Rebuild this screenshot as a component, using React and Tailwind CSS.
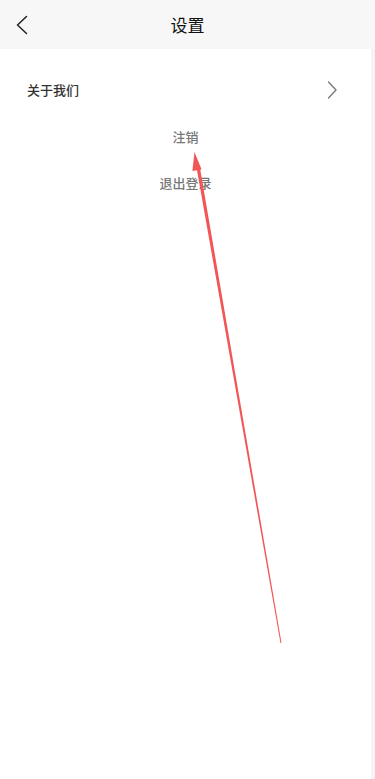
const fuente = { fontFamily: '"Noto Sans CJK SC", "Noto Sans", sans-serif' };

const App = () => {
  return (
    <div className="relative w-[375px] h-[779px] overflow-hidden bg-[#f5f5f5]" style={fuente}>
      {/* Header */}
      <div className="h-[49px] bg-[#f7f7f7] flex items-center relative">
        <div className="pl-[16px] flex items-center">
          <svg width="12" height="20" viewBox="0 0 12 20" fill="none">
            <path d="M10.5 1.5 L1.5 10 L10.5 18.5" stroke="#222" strokeWidth="1.5" strokeLinecap="round" strokeLinejoin="round" />
          </svg>
        </div>
        <div className="absolute inset-x-0 text-center text-[17px] text-[#111] leading-none pointer-events-none">
          设置
        </div>
      </div>

      {/* Contenido */}
      <div className="w-[371px] h-[730px] bg-white">
        <div className="flex items-center justify-between pl-[27px] pr-[34px] h-[82px]">
          <span className="text-[13px] font-medium text-[#333]">关于我们</span>
          <svg width="10" height="18" viewBox="0 0 10 18" fill="none">
            <path d="M1.5 1 L9 9 L1.5 17" stroke="#777" strokeWidth="1.3" strokeLinecap="round" strokeLinejoin="round" />
          </svg>
        </div>
        <div className="flex flex-col items-center -mt-[10px]">
          <div className="h-[32px] flex items-center text-[13px] font-medium text-[#777]">注销</div>
          <div className="h-[14px]" />
          <div className="h-[32px] flex items-center text-[13px] font-medium text-[#777]">退出登录</div>
        </div>
      </div>

      {/* Flecha de anotación */}
      <svg className="absolute inset-0 pointer-events-none" width="375" height="779" viewBox="0 0 375 779">
        <polygon points="281.5,643 280.5,643 196.6,168 199.9,167.4" fill="#f25555" />
        <polygon points="194.5,152 192.4,171 201.6,169.4" fill="#f25555" />
      </svg>
    </div>
  );
};

export default App;
